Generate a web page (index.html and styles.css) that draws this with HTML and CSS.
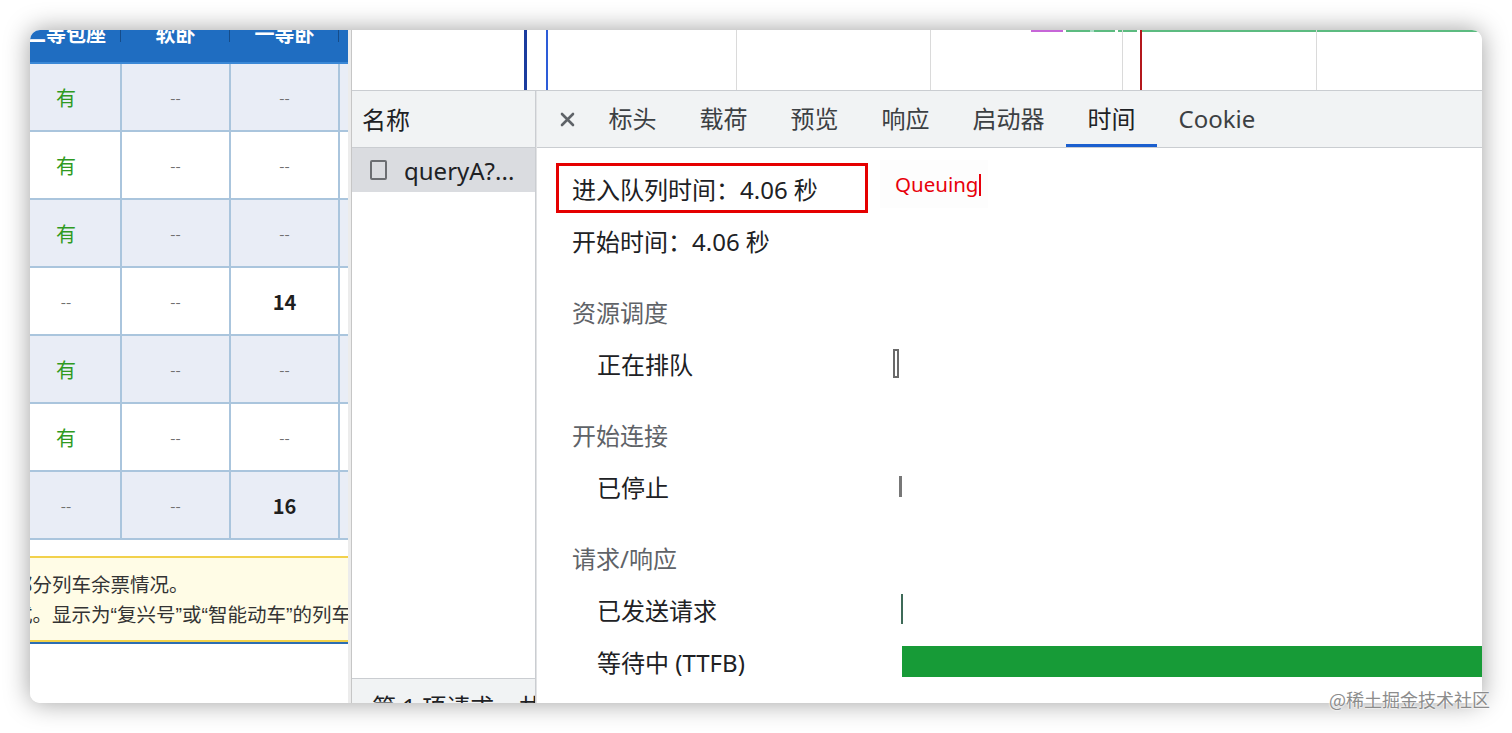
FILE: index.html
```html
<!DOCTYPE html>
<html lang="zh-CN">
<head>
  <meta charset="UTF-8" />
  <meta name="viewport" content="width=device-width, initial-scale=1.0" />
  <title>余票查询 - Network Timing</title>
  <link rel="stylesheet" href="styles.css">
</head>
<body>
  <div class="window">
    <!-- PAGE PANE (12306 table) -->
    <div class="page-pane">
      <table class="tickets">
        <colgroup>
          <col class="c1"><col class="c2"><col class="c3"><col class="c4">
        </colgroup>
        <thead>
          <tr><th>二等包座</th><th>软卧</th><th>一等卧</th><th>硬卧</th></tr>
        </thead>
        <tbody>
          <tr><td class="yes">有</td><td>--</td><td>--</td><td></td></tr>
          <tr><td class="yes">有</td><td>--</td><td>--</td><td></td></tr>
          <tr><td class="yes">有</td><td>--</td><td>--</td><td></td></tr>
          <tr><td>--</td><td>--</td><td class="num">14</td><td></td></tr>
          <tr><td class="yes">有</td><td>--</td><td>--</td><td></td></tr>
          <tr><td class="yes">有</td><td>--</td><td>--</td><td></td></tr>
          <tr><td>--</td><td>--</td><td class="num">16</td><td></td></tr>
        </tbody>
      </table>
      <div class="notice">
        <p>部分列车余票情况。</p>
        <p>式。显示为“复兴号”或“智能动车”的列车</p>
      </div>
    </div>

    <div class="splitter"></div>

    <!-- DEVTOOLS -->
    <div class="devtools">
      <div class="overview">
        <span class="mark purple" style="left:679px;width:32px"></span>
        <span class="mark green" style="left:714px;width:24px"></span>
        <span class="mark teal" style="left:738px;width:4px"></span>
        <span class="mark green" style="left:742px;width:21px"></span>
        <span class="mark green" style="left:766px;width:19px"></span>
        <span class="mark green" style="left:790px;width:340px"></span>
        <span class="vline blue-thick" style="left:172px"></span>
        <span class="vline blue" style="left:194px"></span>
        <span class="vline" style="left:384px"></span>
        <span class="vline" style="left:578px"></span>
        <span class="vline" style="left:770px"></span>
        <span class="vline red" style="left:788px"></span>
        <span class="vline" style="left:964px"></span>
      </div>

      <div class="network">
        <div class="names">
          <div class="names-head">名称</div>
          <div class="name-row selected">
            <span class="checkbox"></span>
            <span class="name-text">queryA?...</span>
          </div>
          <div class="names-list"></div>
          <div class="status-bar">第 1 项请求，共 1 项</div>
        </div>

        <div class="details">
          <div class="tabbar">
            <div class="close">
              <svg width="15" height="15" viewBox="0 0 15 15"><path d="M2 2 L13 13 M13 2 L2 13" stroke="#5f6368" stroke-width="2.6" stroke-linecap="round"/></svg>
            </div>
            <div class="tab">标头</div>
            <div class="tab">载荷</div>
            <div class="tab">预览</div>
            <div class="tab">响应</div>
            <div class="tab">启动器</div>
            <div class="tab active">时间</div>
            <div class="tab">Cookie</div>
          </div>

          <div class="timing">
            <div class="row"><div class="label">进入队列时间：4.06 秒</div></div>
            <div class="row"><div class="label">开始时间：4.06 秒</div></div>

            <div class="row section"><div class="label">资源调度</div></div>
            <div class="row sub">
              <div class="label">正在排队</div>
              <div class="track"><span class="bar bar-queue" style="margin-left:0px"></span></div>
            </div>

            <div class="row section"><div class="label">开始连接</div></div>
            <div class="row sub">
              <div class="label">已停止</div>
              <div class="track"><span class="bar bar-stall" style="margin-left:6px"></span></div>
            </div>

            <div class="row section"><div class="label">请求/响应</div></div>
            <div class="row sub">
              <div class="label">已发送请求</div>
              <div class="track"><span class="bar bar-sent" style="margin-left:8px"></span></div>
            </div>
            <div class="row sub">
              <div class="label">等待中 (TTFB)</div>
              <div class="track"><span class="bar bar-wait" style="margin-left:9px"></span></div>
            </div>
            <div class="row sub">
              <div class="label">正在下载内容</div>
              <div class="track"><span class="bar bar-sent" style="margin-left:588px"></span></div>
            </div>
          </div>

          <!-- annotations -->
          <div class="annot-box"></div>
          <div class="annot-label">Queuing<i class="caret"></i></div>
        </div>
      </div>
    </div>
  </div>

  <div class="watermark">@稀土掘金技术社区</div>
</body>
</html>
```

FILE: styles.css
```css
/* RESET & BASE */
* {
  margin: 0;
  padding: 0;
  box-sizing: border-box;
}
body {
  position: relative;
  height: 733px;
  padding: 30px;
  overflow: hidden;
  background: #fff;
  font-family: "Noto Sans", "Noto Sans CJK SC", sans-serif;
  color: #202124;
}
.window {
  display: flex;
  width: 1452px;
  height: 673px;
  border-radius: 10px;
  overflow: hidden;
  background: #fff;
  box-shadow: 0 0 26px rgba(0,0,0,0.38);
}

/* PAGE PANE */
.page-pane {
  flex: none;
  width: 318px;
  overflow: hidden;
  background: #fff;
}
.tickets {
  border-collapse: collapse;
  table-layout: fixed;
  width: 437px;
  margin-top: -22px;
  margin-left: -20px;
  font-family: "Noto Sans CJK SC", sans-serif;
}
.tickets col.c1 { width: 110px; }
.tickets col.c2,
.tickets col.c3,
.tickets col.c4 { width: 109px; }
.tickets th {
  position: relative;
  height: 55px;
  padding-bottom: 4px;
  background: #1f6dc1;
  color: #fff;
  font-size: 20px;
  font-weight: bold;
  border-bottom: 2px solid #3b88d6;
}
.tickets th::after {
  content: "";
  position: absolute;
  right: -1px;
  top: 22px;
  width: 2px;
  height: 12px;
  background: #154c8a;
}
.tickets td {
  height: 68px;
  border: 2px solid #aac5dd;
  text-align: center;
  font-size: 15px;
  color: #707070;
  background: #fff;
}
.tickets tbody tr:nth-child(odd) td {
  background: #e9edf6;
}
.tickets td.yes {
  color: #2f9a21;
  font-size: 20px;
}
.tickets td.num {
  color: #1f1f1f;
  font-size: 20px;
  font-weight: bold;
}
.notice {
  margin-top: 16px;
  padding: 12px 0 10px;
  background: #fffce6;
  border-top: 2px solid #f2d14b;
  border-bottom: 2px solid #f2d14b;
  box-shadow: 0 2px 0 #2c6db3;
  font-family: "Liberation Sans", "Noto Sans CJK SC", sans-serif;
  font-size: 19.5px;
  line-height: 30px;
  color: #333;
  white-space: nowrap;
  overflow: hidden;
}
.notice p {
  margin-left: -17px;
}

/* SPLITTER */
.splitter {
  flex: none;
  width: 4px;
  background: #ececec;
  border-right: 1px solid #c6c6c6;
}

/* DEVTOOLS */
.devtools {
  flex: 1;
  display: flex;
  flex-direction: column;
  min-width: 0;
}
.overview {
  position: relative;
  flex: none;
  height: 61px;
  border-bottom: 1px solid #cacdd1;
  background: #fff;
}
.vline {
  position: absolute;
  top: 0;
  bottom: 0;
  width: 1px;
  background: #dadada;
}
.vline.blue-thick { width: 3px; background: #1b3c9e; }
.vline.blue { width: 2px; background: #2d5cd8; }
.vline.red { width: 2px; background: #b4181c; }
.mark {
  position: absolute;
  top: 0;
  height: 2px;
}
.mark.purple { background: #c766d8; }
.mark.green { background: #5cbb80; }
.mark.teal { background: #a8dcc4; }

.network {
  flex: 1;
  display: flex;
  min-height: 0;
}

/* NAME COLUMN */
.names {
  flex: none;
  width: 184px;
  display: flex;
  flex-direction: column;
  border-right: 1px solid #cacdd1;
  background: #fff;
}
.names-head {
  height: 57px;
  padding-left: 10px;
  line-height: 58px;
  font-size: 24px;
  background: #f1f3f4;
  border-bottom: 1px solid #cacdd1;
}
.name-row {
  display: flex;
  align-items: center;
  height: 44px;
  padding: 0 12px 0 18px;
  font-size: 24px;
}
.name-row.selected {
  background: #dadce0;
}
.checkbox {
  flex: none;
  width: 17px;
  height: 20px;
  margin-right: 17px;
  border: 2px solid #6b6e72;
  border-radius: 2px;
}
.name-text {
  overflow: hidden;
  white-space: nowrap;
}
.names-list {
  flex: 1;
}
.status-bar {
  flex: none;
  height: 25px;
  padding: 16px 0 0 20px;
  border-top: 1px solid #cacdd1;
  background: #f1f3f4;
  font-size: 24px;
  line-height: 24px;
  white-space: nowrap;
  overflow: hidden;
}

/* DETAILS */
.details {
  position: relative;
  flex: 1;
  min-width: 0;
  display: flex;
  flex-direction: column;
  border-left: 1px solid #e2e3e5;
}
.tabbar {
  flex: none;
  display: flex;
  height: 57px;
  background: #f1f3f4;
  border-bottom: 1px solid #cacdd1;
}
.close {
  display: flex;
  align-items: center;
  justify-content: center;
  width: 40px;
  margin-left: 10px;
}
.tab {
  padding: 0 21.5px;
  line-height: 56px;
  font-size: 24px;
  color: #3c4043;
}
.tab.active {
  color: #202124;
  box-shadow: inset 0 -3px 0 #1b5fcf;
}
.timing {
  padding: 14px 0 0 35px;
  font-size: 24px;
}
.row {
  display: flex;
  align-items: center;
  height: 52px;
}
.row .label {
  flex: none;
  width: 321px;
  white-space: nowrap;
}
.row.section {
  margin-top: 19px;
  color: #5f6368;
}
.row.sub .label {
  padding-left: 25px;
}
.track {
  flex: 1;
  display: flex;
  align-items: center;
  height: 100%;
}
.bar {
  flex: none;
  display: block;
}
.bar-queue {
  width: 6px;
  height: 29px;
  border: 2px solid #6a6a6a;
  background: #fff;
}
.bar-stall {
  width: 3px;
  height: 21px;
  background: #777;
}
.bar-sent {
  width: 2px;
  height: 30px;
  background: #3e6a58;
}
.bar-wait {
  flex: 1;
  height: 31px;
  background: #179b37;
}

/* ANNOTATIONS */
.annot-box {
  position: absolute;
  left: 19px;
  top: 72px;
  width: 312px;
  height: 50px;
  border: 3px solid #e50000;
}
.annot-label {
  position: absolute;
  left: 343px;
  top: 69px;
  width: 108px;
  height: 48px;
  padding-left: 15px;
  line-height: 48px;
  font-size: 20.5px;
  color: #e8000b;
  background: rgba(0,0,0,0.008);
}
.caret {
  display: inline-block;
  width: 2px;
  height: 22px;
  margin-left: 1px;
  vertical-align: -4px;
  background: #e8000b;
}

/* WATERMARK */
.watermark {
  position: absolute;
  right: 22px;
  bottom: 21px;
  font-family: "Noto Sans CJK SC", sans-serif;
  font-size: 18px;
  color: #8c8c8c;
  text-shadow: 0 0 2px #fff, 0 0 2px #fff;
}
```
